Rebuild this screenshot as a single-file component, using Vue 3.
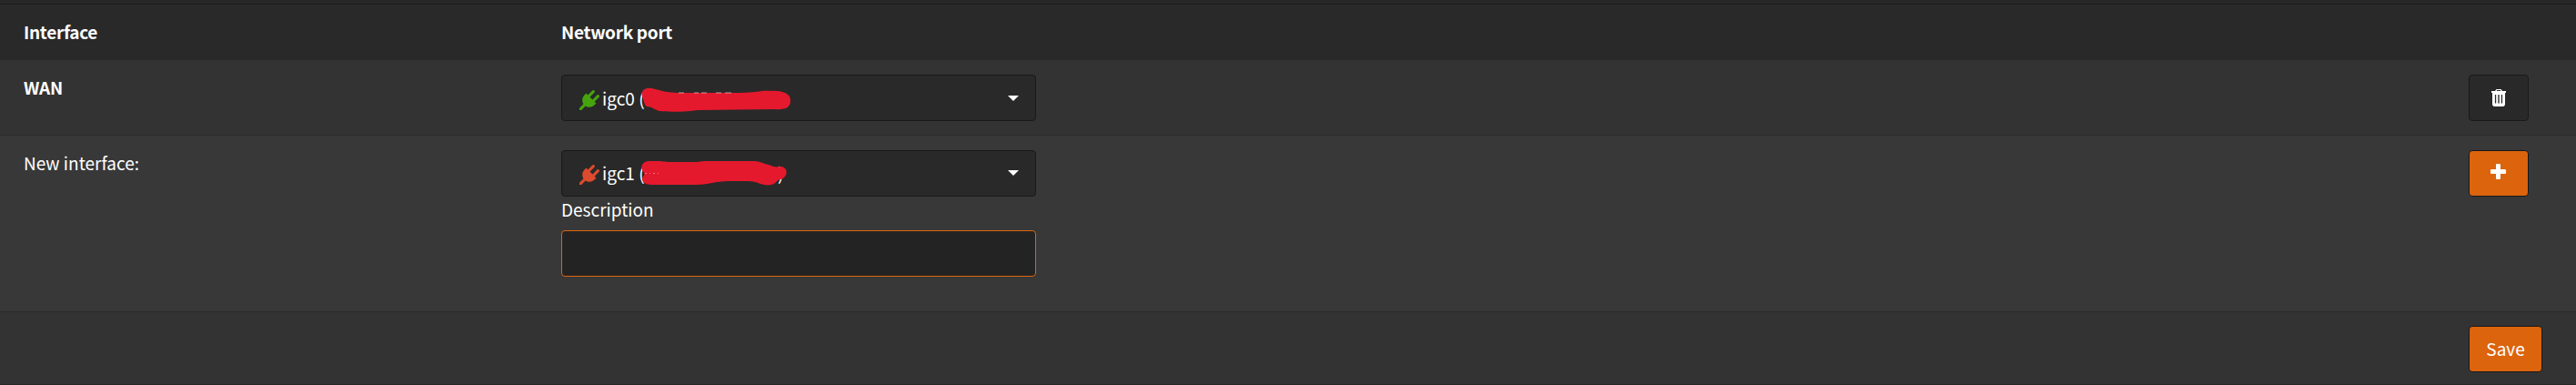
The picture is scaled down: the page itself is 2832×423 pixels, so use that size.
<script setup>
import { ref } from 'vue'

const description = ref('')
const plug = 'M1755 453q37 38 37 90.500t-37 90.500l-401 400 150 150-160 160q-163 163-389.500 186.500t-411.500-100.500l-362 362h-181v-181l362-362q-124-185-100.500-411.500t186.500-389.500l160-160 150 150 400-401q38-37 91-37t90 37 37 90.500-37 90.500l-400 401 234 234 401-400q38-37 91-37t90 37z'
</script>

<template>
  <div class="table">
    <div class="row head">
      <div class="name bold">Interface</div>
      <div class="port bold heading">Network port</div>
    </div>
    <div class="row wan">
      <div class="name bold wan-label">WAN</div>
      <div class="port">
        <div class="select">
          <svg class="plug up" viewBox="0 0 1792 1792"><path :d="plug" /></svg>
          <span class="value">igc0 (<span class="close">)</span></span>
          <svg class="scribble" viewBox="0 0 170 32">
            <path d="M3 11C1 4 7 1 13 2C20 3 28 7 43 7H111C130 7 133 4 145 5C158 4 167 9 166 16C166 23 160 26 149 25L64 26C51 28 30 28 22 27C17 26 14 22 8 22C5 20 5 15 3 11Z" />
            <path class="marks" d="M43 7H49M60 7H65M68 7H74M84 7H90M94 7H101" />
          </svg>
          <i class="caret"></i>
        </div>
      </div>
      <div class="actions">
        <button class="btn icon" aria-label="Delete">
          <svg class="trash" viewBox="0 0 18 20"><path fill-rule="evenodd" d="M5 3L6.500 1H11.500L13 3H17V5H16V17Q16 20 13.500 20H4.500Q2 20 2 17V5H1V3ZM6.500 3H11.500L10.800 2H7.200ZM4.900 7V16.500H6.200V7ZM8.300 7V16.500H9.700V7ZM11.800 7V16.500H13.100V7Z" /></svg>
        </button>
      </div>
    </div>
    <div class="row create">
      <div class="name new-label">New interface:</div>
      <div class="port">
        <div class="select second">
          <svg class="plug down" viewBox="0 0 1792 1792"><path :d="plug" /></svg>
          <span class="value">igc1 (<span class="close">)</span></span>
          <svg class="scribble" viewBox="0 0 170 32">
            <path d="M3 12C1 6 5 2 11 2H22L32 3H63L71 2H126C133 2 136 5 142 6C148 8 148 9 156 8C163 9 164 18 156 22C152 22 152 24 149 26C146 29 139 29 133 27C125 23 119 24 96 24C80 25 73 28 64 28H13C4 28 2 23 4 19C7 16 5 15 3 12Z" />
            <path class="marks dim" d="M6 15.500H8M11 15.500H12M15 15.500H17M20 15.500H21" />
          </svg>
          <i class="caret"></i>
        </div>
        <label class="description" for="description">Description</label>
        <input id="description" v-model="description" class="field" type="text" />
      </div>
      <div class="actions">
        <button class="btn icon orange" aria-label="Add">
          <svg class="plus" viewBox="0 0 17 17"><path d="M7 0H10Q11 0 11 1V6H16Q17 6 17 7V10Q17 11 16 11H11V16Q11 17 10 17H7Q6 17 6 16V11H1Q0 11 0 10V7Q0 6 1 6H6V1Q6 0 7 0Z" /></svg>
        </button>
      </div>
    </div>
    <div class="row foot">
      <div class="actions"><button class="btn orange save">Save</button></div>
    </div>
  </div>
</template>

<style>
body { background: #292929; }
</style>

<style scoped>
* { box-sizing: border-box; }
.table {
  height: 423px;
  overflow: hidden;
  padding-top: 4px;
  background: #272727;
  border-bottom: 1px solid #272727;
  color: #fff;
  font: 19px/30px "Noto Sans CJK SC", "Noto Sans", sans-serif;
}
.row { display: flex; padding-left: 26px; }
.name { width: 591px; flex: none; }
.port { width: 522px; flex: none; }
.bold { font-weight: 700; letter-spacing: -0.3px; }
.head { height: 62px; padding-top: 15px; border-top: 1px solid #1a1a1a; background: #292929; }
.wan { height: 82px; padding-top: 16px; background: #333; }
.wan-label { margin-top: -1px; }
.create { height: 194px; padding-top: 16px; background: #383838; border-top: 1px solid #2b2b2b; }
.new-label { margin-top: -1px; }
.foot { height: 80px; padding-top: 15px; background: #333; border-top: 1px solid #2b2b2b; }
.select {
  position: relative;
  display: flex;
  align-items: center;
  height: 51px;
  padding: 0 18px 0 19px;
  border: 1px solid #191919;
  border-radius: 4px;
  background: #292929;
}
.second { padding-bottom: 2px; }
.plug { width: 22px; height: 22px; margin: 5px 3px 0 0; flex: none; }
.up { fill: #45a40e; }
.down { fill: #dc4b2d; }
.value { position: relative; white-space: pre; }
.close { position: absolute; left: 193px; }
.scribble { position: absolute; left: 85px; top: 12px; width: 170px; height: 32px; fill: #e5192d; }
.second .scribble { top: 9px; }
.marks { fill: none; stroke: #d9b9bb; stroke-width: 0.8; }
.dim { stroke: #f08a94; }
.caret {
  margin-left: auto;
  border: 6px solid transparent;
  border-top-color: #fff;
  border-bottom: 0;
}
.description { display: block; height: 37px; line-height: 28px; }
.field {
  display: block;
  width: 522px;
  height: 51px;
  padding: 0 18px;
  border: 1px solid #dc640d;
  border-radius: 4px;
  outline: none;
  background: #232323;
  color: #fff;
  font: inherit;
}
.actions { width: 118px; margin-left: auto; flex: none; }
.btn {
  display: flex;
  align-items: center;
  justify-content: center;
  height: 51px;
  padding: 0;
  border: 1px solid #191919;
  border-radius: 4px;
  background: #292929;
  color: #fff;
  font: inherit;
}
.icon { width: 66px; }
.orange { background: #dc640d; }
.save { width: 81px; padding-bottom: 1px; }
.trash { width: 18px; height: 20px; margin-bottom: 1px; fill: #fff; }
.plus { width: 17px; height: 17px; margin: -4px 1px 0 0; fill: #fff; }
</style>
